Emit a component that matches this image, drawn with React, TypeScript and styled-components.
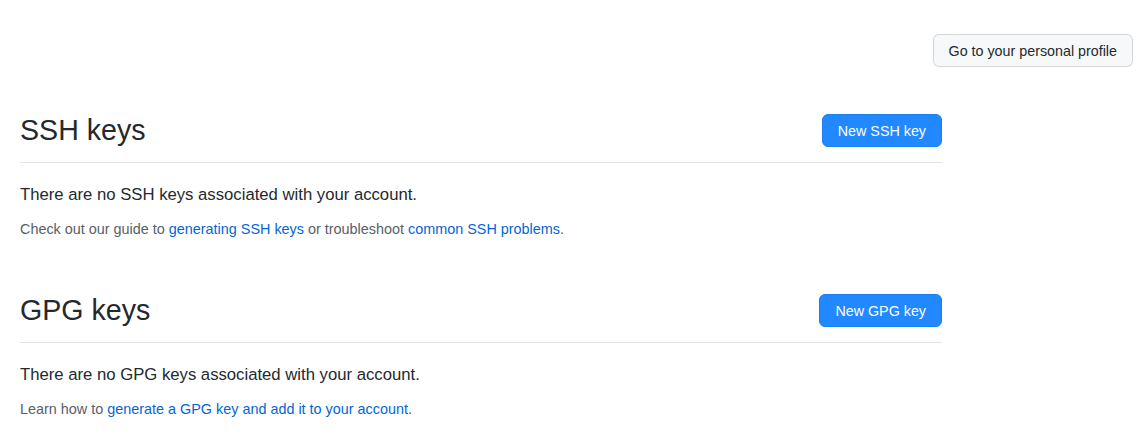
import React from "react";
import styled, { createGlobalStyle } from "styled-components";

const GlobalStyle = createGlobalStyle`
  html, body {
    margin: 0;
    padding: 0;
    background: #ffffff;
  }
  body {
    font-family: "Liberation Sans", Arial, Helvetica, sans-serif;
    color: #24292e;
  }
`;

const Page = styled.div`
  display: flex;
  flex-direction: column;
  width: 1147px;
  padding-top: 34px;
  box-sizing: border-box;
`;

const TopBar = styled.div`
  display: flex;
  justify-content: flex-end;
  padding-right: 14px;
`;

const SecondaryButton = styled.button`
  height: 33px;
  padding: 0 15px;
  font-family: inherit;
  font-size: 14.3px;
  color: #24292e;
  background: #f6f8fa;
  border: 1px solid rgba(27, 31, 35, 0.15);
  border-radius: 6px;
  box-sizing: border-box;
  white-space: nowrap;
`;

const Content = styled.div`
  display: flex;
  flex-direction: column;
  width: 922px;
  margin-left: 20px;
  padding-top: 47px;
  gap: 54px;
`;

const Section = styled.section`
  display: flex;
  flex-direction: column;
`;

const SectionHeader = styled.div`
  display: flex;
  align-items: center;
  justify-content: space-between;
  padding-bottom: 15px;
  border-bottom: 1px solid #e1e4e8;
`;

const Heading = styled.h2`
  margin: 0;
  font-size: 28.6px;
  font-weight: 400;
  line-height: 33px;
  color: #24292e;
`;

const PrimaryButton = styled.button`
  height: 33px;
  padding: 0 15px;
  font-family: inherit;
  font-size: 14.3px;
  color: #ffffff;
  background: #2188ff;
  border: 1px solid #1c7fef;
  border-radius: 6px;
  box-sizing: border-box;
  white-space: nowrap;
`;

const EmptyText = styled.p`
  margin: 20px 0 0;
  font-size: 16.7px;
  line-height: 24px;
  color: #24292e;
`;

const Note = styled.p`
  margin: 12px 0 0;
  font-size: 14.4px;
  line-height: 21px;
  color: #586069;
`;

const Link = styled.a`
  color: #0366d6;
  text-decoration: none;
`;

export default function App() {
  return (
    <>
      <GlobalStyle />
      <Page>
        <TopBar>
          <SecondaryButton>Go to your personal profile</SecondaryButton>
        </TopBar>
        <Content>
          <Section>
            <SectionHeader>
              <Heading>SSH keys</Heading>
              <PrimaryButton>New SSH key</PrimaryButton>
            </SectionHeader>
            <EmptyText>There are no SSH keys associated with your account.</EmptyText>
            <Note>
              Check out our guide to <Link href="#">generating SSH keys</Link> or troubleshoot{" "}
              <Link href="#">common SSH problems</Link>.
            </Note>
          </Section>
          <Section>
            <SectionHeader>
              <Heading>GPG keys</Heading>
              <PrimaryButton>New GPG key</PrimaryButton>
            </SectionHeader>
            <EmptyText>There are no GPG keys associated with your account.</EmptyText>
            <Note>
              Learn how to <Link href="#">generate a GPG key and add it to your account.</Link>
            </Note>
          </Section>
        </Content>
      </Page>
    </>
  );
}
